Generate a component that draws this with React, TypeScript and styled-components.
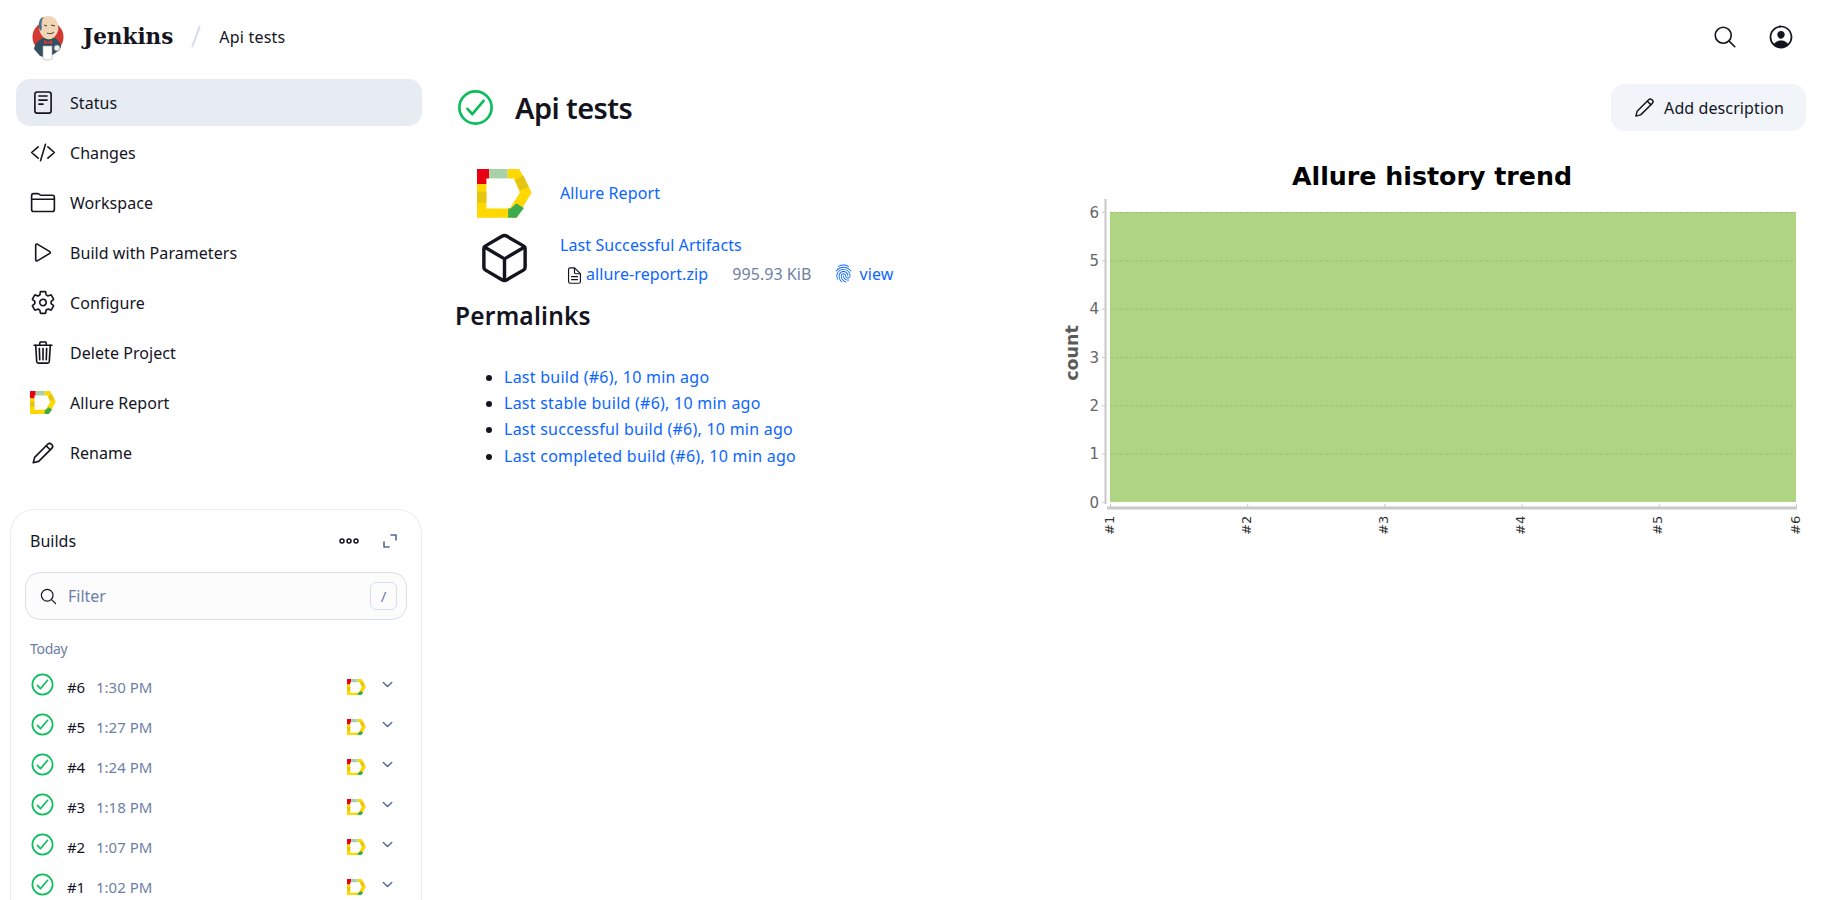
import React from "react";
import styled, { createGlobalStyle } from "styled-components";
import {
  IoReaderOutline, IoCodeSlashOutline, IoFolderOutline, IoPlayOutline, IoSettingsOutline,
  IoTrashOutline, IoSearchOutline, IoPersonCircleOutline, IoCheckmarkCircleOutline,
  IoCubeOutline, IoDocumentTextOutline, IoFingerPrintOutline, IoChevronDownOutline,
} from "react-icons/io5";

const Global = createGlobalStyle`
  html, body { margin: 0; padding: 0; background: #fff; overflow: hidden; height: 100%; }
  body { font-family: "Noto Sans", "Open Sans", sans-serif; color: #14141f; font-size: 16px; }
  * { box-sizing: border-box; }
`;

const Page = styled.div`height: 900px; overflow: hidden; display: flex; flex-direction: column;`;
const Header = styled.header`height: 72px; display: flex; align-items: center; padding: 0 32px 0 31px; flex: none;`;
const LogoSlot = styled.span`display: flex; margin-top: 3px;`;
const Brand = styled.div`font-family: "DejaVu Serif", serif; font-weight: 700; font-size: 21.500px; margin-left: 16px; color: #14141f;`;
const Slash = styled.span`width: 2px; height: 23px; background: #d5dbe8; transform: rotate(20deg); margin: 0 22px 0 22px; border-radius: 2px;`;
const Crumb = styled.span`font-size: 16px; margin-top: 2px; letter-spacing: .2px;`;
const Spacer = styled.div`flex: 1;`;
const HeaderBtn = styled.span<{ $s: number }>`display: flex; margin: 2px 0 0 29px; font-size: ${p => p.$s}px;`;

const Body = styled.div`flex: 1; display: flex; min-height: 0;`;
const Side = styled.aside`width: 455px; flex: none; padding-left: 10px; padding-top: 7px;`;
const Tasks = styled.nav`margin: 0 33px 0 6px; display: flex; flex-direction: column; gap: 3px;`;
const Task = styled.div<{ $active?: boolean }>`
  height: 47px; border-radius: 14px; display: flex; align-items: center; padding-left: 14px; gap: 14px;
  background: ${p => (p.$active ? "#e7ecf3" : "transparent")}; font-size: 16px; letter-spacing: .05px;
`;
const TaskIcon = styled.span`width: 26px; height: 26px; display: flex; align-items: center; justify-content: center; font-size: 27px; flex: none; color: #14141f;`;

const Card = styled.section`margin: 33px 33px 0 0; border: 1px solid #e9edf4; border-radius: 24px; padding: 0 14px; height: 500px;`;
const CardHead = styled.div`height: 62px; display: flex; align-items: center; padding: 0 9px 0 5px; font-size: 16px;`;
const CardBtn = styled.span<{ $ml?: number }>`display: flex; margin-left: ${p => p.$ml || 0}px; color: #14141f;`;
const Filter = styled.div`height: 48px; border: 1px solid #d7ddea; border-radius: 15px; background: #fcfcfd; display: flex; align-items: center; padding: 0 9px 0 13px; color: #6d7fa5;`;
const FilterIcon = styled.span`display: flex; font-size: 19px; color: #14141f; margin-right: 10px;`;
const Kbd = styled.span`width: 27px; height: 28px; border: 1px solid #d7ddea; border-radius: 6px; display: flex; align-items: center; justify-content: center; font-size: 15px;`;
const Day = styled.div`margin: 19px 0 0 5px; font-size: 14px; color: #6d7fa5; letter-spacing: -.3px; line-height: 20px;`;
const BuildList = styled.div`margin-top: 8px;`;
const BuildRow = styled.div`height: 40px; display: flex; align-items: center; padding-left: 4px; font-size: 15px;`;
const BuildCheck = styled.span`display: flex; font-size: 27px; color: #0abf5b; margin-top: -6px;`;
const BuildNo = styled.span`margin-left: 11px; width: 29px; letter-spacing: -.2px;`;
const BuildTime = styled.span`color: #6d7fa5;`;
const BuildChevron = styled.span`display: flex; font-size: 15px; color: #526a96; margin: -5px 0 0 14px; padding-right: 12px;`;

const Main = styled.main`flex: 1; min-width: 0; padding: 12px 21px 0 0;`;
const TitleRow = styled.div`height: 47px; display: flex; align-items: center;`;
const TitleIcon = styled.span`display: flex; font-size: 43px; color: #0abf5b; margin-left: -1px;`;
const Title = styled.h1`margin: 0 0 0 18px; font-size: 29px; font-weight: 600; letter-spacing: -.6px; line-height: 40px; flex: 1;`;
const AddBtn = styled.button`
  height: 47px; width: 195px; border: 0; border-radius: 14px; background: #f1f4f8; display: flex; align-items: center; justify-content: center; gap: 8px;
  font: inherit; color: #14141f; padding: 0; letter-spacing: .1px;
`;
const Columns = styled.div`display: flex; margin-top: 38px;`;
const Left = styled.div`width: 600px; flex: none;`;
const Apps = styled.div`padding-left: 22px;`;
const AppRow = styled.div`display: flex; min-height: 48px; align-items: flex-end; gap: 28px;`;
const AppIcon = styled.div`width: 55px; display: flex; justify-content: center; flex: none;`;
const A = styled.a`color: #0b66ff; text-decoration: none; letter-spacing: .1px;`;
const AppText = styled.div`padding-bottom: 13px; line-height: 24px;`;
const ArtRow = styled.div`display: flex; gap: 28px; margin-top: 16px;`;
const ArtIcon = styled.div`width: 55px; font-size: 68px; display: flex; justify-content: center; flex: none; height: 58px; align-items: center; margin-top: -5px;`;
const ArtText = styled.div`line-height: 24px; margin-top: -1px;`;
const FileLine = styled.div`display: flex; align-items: center; margin: 5px 0 0 5px; line-height: 24px;`;
const FileIcon = styled.span`display: flex; font-size: 19px; margin: 3px 2px 0 0;`;
const Size = styled.span`color: #6d7fa5; margin-left: 24px; letter-spacing: .05px;`;
const ViewIcon = styled.span`display: flex; font-size: 19px; color: #0b66ff; margin: 0 6px 0 23px;`;
const H2 = styled.h2`margin: 12px 0 0; font-size: 24.500px; font-weight: 600; letter-spacing: .2px; line-height: 34px;`;
const Ul = styled.ul`margin: 31px 0 0; padding: 0 0 0 49px; line-height: 26.3px; ${A} { letter-spacing: .25px; }`;
const Chart = styled.svg`display: block; margin: -11px 0 0 -14px; flex: none;`;

const PencilIcon = ({ size }: { size: number }) => (
  <svg width={size} height={size} viewBox="0 0 24 24" fill="none" stroke="currentColor" strokeWidth="1.500" strokeLinejoin="round" strokeLinecap="round">
    <path d="M3 21l1.300-5L16.300 3.900a2.500 2.500 0 0 1 3.500 0l.3.300a2.500 2.500 0 0 1 0 3.500L8 19.700z" />
    <path d="M15 5.400l3.600 3.600" />
  </svg>
);

const DotsIcon = () => (
  <svg width="20" height="8" viewBox="0 0 20 8" fill="none" stroke="#14141f" strokeWidth="1.500">
    <circle cx="3" cy="4" r="2" />
    <circle cx="10" cy="4" r="2" />
    <circle cx="17" cy="4" r="2" />
  </svg>
);

const AllureLogo = ({ w }: { w: number }) => (
  <svg width={w} height={(w * 145) / 164} viewBox="52 27 164 145">
    <polygon fill="#fed800" points="143,27 178,27 215,97 170,172 52,172 52,72 80,72 80,145 150,145 180,97 162,55 143,55" />
    <polygon fill="#e4c512" points="52,95 80,95 80,127 52,127" />
    <polygon fill="#e4c512" points="165,60 190,46 206,80 180,92" />
    <polygon fill="#e60012" points="52,27 88,27 88,55 80,55 80,72 52,72" />
    <polygon fill="#a8d2a6" points="88,27 143,27 143,55 88,55" />
    <polygon fill="#3fab4d" points="145,172 145,145 152,145 170,130 192,143 170,172" />
  </svg>
);

const JenkinsLogo = () => (
  <svg width="36" height="46" viewBox="0 0 36 46">
    <circle cx="17" cy="22" r="15.500" fill="#d33833" />
    <path d="M3 34c1-6 5-9 9-11l12 0c3 2 6 6 6 9l-3 4-4 3-7 4-7-2z" fill="#335061" />
    <path d="M8 11C8 4 12 1 17 1c6 0 10 4 10 10 1 3 0 6-2 9-2 3-5 5-9 4-4-1-6-4-7-7-1-2-1-4-1-6z" fill="#f0d6b7" />
    <path d="M8 12C7 6 10 2 13 2c-2 2-3 6-2 11l-1 3c-1-1-2-2-2-4z" fill="#49728b" />
    <path d="M13 10l3 1M20 10l4 1M16 18c2 1 5 1 7-1" stroke="#49352b" strokeWidth="1" fill="none" />
    <path d="M13 25l4 2 4-2 0 4-4-1-4 1z" fill="#d33833" />
    <path d="M12 31h9v13c-3 1.500-6 1.500-9 0z" fill="#fff" stroke="#aaa" strokeWidth=".6" />
    <circle cx="26" cy="33" r="3" fill="#eee" stroke="#777" strokeWidth=".6" />
  </svg>
);

const ExpandIcon = () => (
  <svg width="16" height="16" viewBox="0 0 16 16" fill="none" stroke="#526a96" strokeWidth="1.600" strokeLinecap="round" strokeLinejoin="round">
    <path d="M9 2h5v5M2 9v5h5" />
  </svg>
);

const tasks: [string, React.ReactNode][] = [
  ["Status", <IoReaderOutline />],
  ["Changes", <IoCodeSlashOutline />],
  ["Workspace", <IoFolderOutline />],
  ["Build with Parameters", <IoPlayOutline />],
  ["Configure", <IoSettingsOutline />],
  ["Delete Project", <IoTrashOutline />],
  ["Allure Report", <AllureLogo w={26} />],
  ["Rename", <PencilIcon size={26} />],
];
const builds = [["#6", "1:30 PM"], ["#5", "1:27 PM"], ["#4", "1:24 PM"], ["#3", "1:18 PM"], ["#2", "1:07 PM"], ["#1", "1:02 PM"]];
const permalinks = ["Last build (#6), 10 min ago", "Last stable build (#6), 10 min ago", "Last successful build (#6), 10 min ago", "Last completed build (#6), 10 min ago"];

const PX0 = 7, PX1 = 693, PY0 = 54, PY1 = 344;
const yOf = (v: number) => PY1 - ((PY1 - PY0) * v) / 6;
const xOf = (i: number) => PX0 + ((PX1 - PX0) * i) / 5;

const TrendChart = () => (
  <Chart width="785" height="400" viewBox="-62 0 785 400" fontFamily='"DejaVu Sans", sans-serif'>
    <text x="329" y="27" textAnchor="middle" fontSize="25.300" fontWeight="700" fill="#000">Allure history trend</text>
    <rect x={PX0} y={PY0} width={PX1 - PX0} height={PY1 - PY0} fill="#afd583" />
    <path d={`M2.500 41V${PY1 + 2}`} stroke="#c8c8c8" strokeWidth="2" />
    <path d={`M4 ${PY1 + 6}H${PX1 + 1}`} stroke="#c8c8c8" strokeWidth="3" />
    {[0, 1, 2, 3, 4, 5, 6].map(v => (
      <g key={v}>
        {v > 0 && <path d={`M${PX0} ${yOf(v) + 0.5}H${PX1}`} stroke="#9cc075" strokeDasharray="3 2" />}
        <path d={`M-1 ${yOf(v) + 0.5}H1.500`} stroke="#c8c8c8" />
        <text x="-4" y={yOf(v) + 5.500} textAnchor="end" fontSize="15" fill="#666">{v}</text>
      </g>
    ))}
    <text transform="translate(-25 195) rotate(-90)" textAnchor="middle" fontSize="17.500" fontWeight="700" fill="#5a5a5a">count</text>
    {[1, 2, 3, 4, 5, 6].map((n, i) => (
      <g key={n}>
        <path d={`M${xOf(i) + 0.5} ${PY1 + 2}V${PY1 + 5}`} stroke="#c8c8c8" />
        <text transform={`translate(${xOf(i) + 3.500} ${PY1 + 33}) rotate(-90)`} fontSize="13" fill="#333">{`#${n}`}</text>
      </g>
    ))}
  </Chart>
);

export default function App() {
  return (
    <Page>
      <Global />
      <Header>
        <LogoSlot><JenkinsLogo /></LogoSlot>
        <Brand>Jenkins</Brand>
        <Slash />
        <Crumb>Api tests</Crumb>
        <Spacer />
        <HeaderBtn $s={26}><IoSearchOutline /></HeaderBtn>
        <HeaderBtn $s={28}><IoPersonCircleOutline /></HeaderBtn>
      </Header>
      <Body>
        <Side>
          <Tasks>
            {tasks.map(([label, icon], i) => (
              <Task key={label} $active={i === 0}>
                <TaskIcon>{icon}</TaskIcon>
                {label}
              </Task>
            ))}
          </Tasks>
          <Card>
            <CardHead>
              Builds
              <Spacer />
              <CardBtn><DotsIcon /></CardBtn>
              <CardBtn $ml={23}><ExpandIcon /></CardBtn>
            </CardHead>
            <Filter>
              <FilterIcon><IoSearchOutline /></FilterIcon>
              Filter
              <Spacer />
              <Kbd>/</Kbd>
            </Filter>
            <Day>Today</Day>
            <BuildList>
              {builds.map(([n, t]) => (
                <BuildRow key={n}>
                  <BuildCheck><IoCheckmarkCircleOutline /></BuildCheck>
                  <BuildNo>{n}</BuildNo>
                  <BuildTime>{t}</BuildTime>
                  <Spacer />
                  <AllureLogo w={19} />
                  <BuildChevron><IoChevronDownOutline /></BuildChevron>
                </BuildRow>
              ))}
            </BuildList>
          </Card>
        </Side>
        <Main>
          <TitleRow>
            <TitleIcon><IoCheckmarkCircleOutline /></TitleIcon>
            <Title>Api tests</Title>
            <AddBtn><PencilIcon size={23} />Add description</AddBtn>
          </TitleRow>
          <Columns>
            <Left>
              <Apps>
                <AppRow>
                  <AppIcon><AllureLogo w={55} /></AppIcon>
                  <AppText><A>Allure Report</A></AppText>
                </AppRow>
                <ArtRow>
                  <ArtIcon><IoCubeOutline /></ArtIcon>
                  <ArtText>
                    <A>Last Successful Artifacts</A>
                    <FileLine>
                      <FileIcon><IoDocumentTextOutline /></FileIcon>
                      <A>allure-report.zip</A>
                      <Size>995.93 KiB</Size>
                      <ViewIcon><IoFingerPrintOutline /></ViewIcon>
                      <A>view</A>
                    </FileLine>
                  </ArtText>
                </ArtRow>
              </Apps>
              <H2>Permalinks</H2>
              <Ul>
                {permalinks.map(l => <li key={l}><A>{l}</A></li>)}
              </Ul>
            </Left>
            <TrendChart />
          </Columns>
        </Main>
      </Body>
    </Page>
  );
}
